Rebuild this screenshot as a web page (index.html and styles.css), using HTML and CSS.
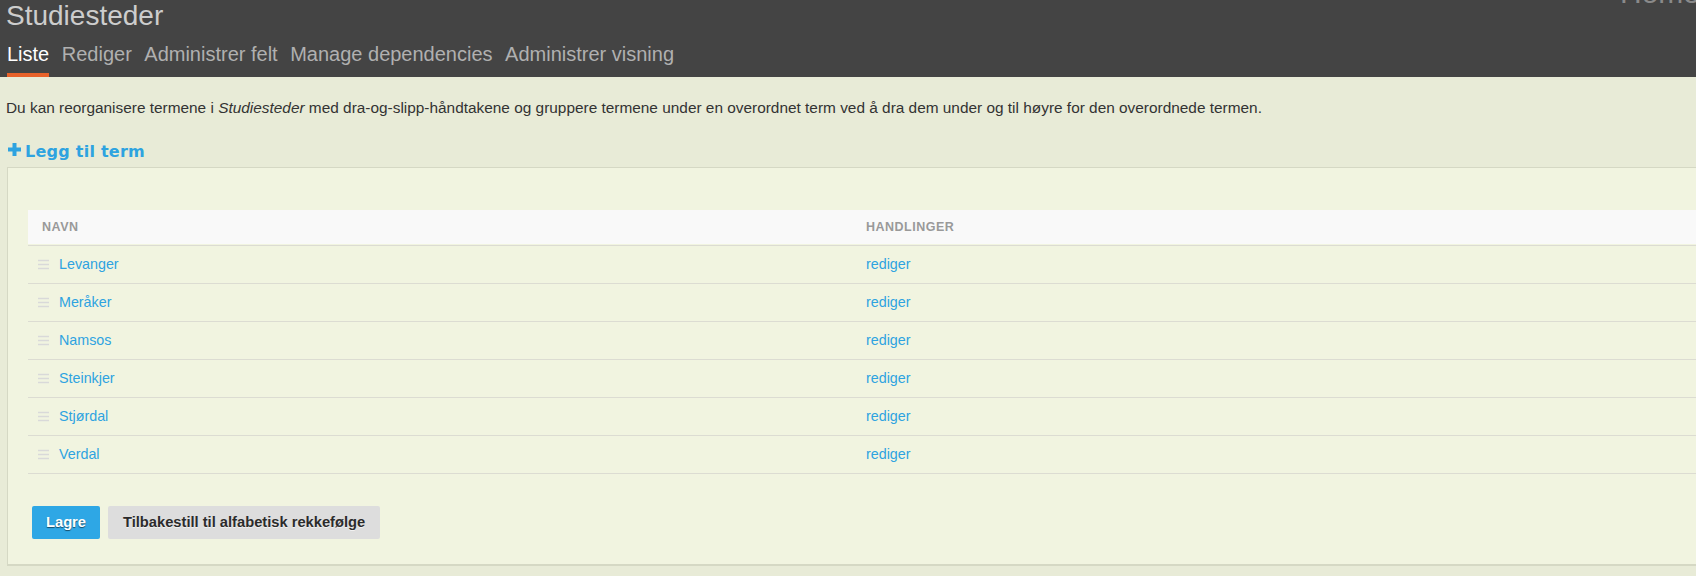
FILE: index.html
```html
<!DOCTYPE html>
<html lang="no">
<head>
<meta charset="utf-8">
<title>Studiesteder</title>
<link rel="stylesheet" href="styles.css">
</head>
<body>
<div class="page">
  <header class="topbar">
    <a class="home-link" href="#">Home</a>
    <h1 class="page-title">Studiesteder</h1>
    <nav class="tabs">
      <a class="tab active" href="#">Liste</a>
      <a class="tab" href="#">Rediger</a>
      <a class="tab" href="#">Administrer felt</a>
      <a class="tab" href="#">Manage dependencies</a>
      <a class="tab" href="#">Administrer visning</a>
    </nav>
  </header>
  <main class="content">
    <p class="help">Du kan reorganisere termene i <em>Studiesteder</em> med dra-og-slipp-håndtakene og gruppere termene under en overordnet term ved å dra dem under og til høyre for den overordnede termen.</p>
    <a class="action-link" href="#"><svg class="plus" width="13" height="13" viewBox="0 0 13 13"><path d="M4.5 0h4v4.5H13v4H8.5V13h-4V8.5H0v-4h4.5z" fill="currentColor"/></svg>Legg til term</a>
    <section class="panel">
      <div class="table">
        <div class="thead">
          <div class="th th-name">Navn</div>
          <div class="th th-ops">Handlinger</div>
        </div>
        <div class="row">
          <div class="cell name"><svg class="handle" width="11" height="11" viewBox="0 0 11 11"><path d="M0 1.5h11M0 5.5h11M0 9.5h11" stroke="currentColor" stroke-width="1.6"/></svg><a href="#">Levanger</a></div>
          <div class="cell ops"><a href="#">rediger</a></div>
        </div>
        <div class="row">
          <div class="cell name"><svg class="handle" width="11" height="11" viewBox="0 0 11 11"><path d="M0 1.5h11M0 5.5h11M0 9.5h11" stroke="currentColor" stroke-width="1.6"/></svg><a href="#">Meråker</a></div>
          <div class="cell ops"><a href="#">rediger</a></div>
        </div>
        <div class="row">
          <div class="cell name"><svg class="handle" width="11" height="11" viewBox="0 0 11 11"><path d="M0 1.5h11M0 5.5h11M0 9.5h11" stroke="currentColor" stroke-width="1.6"/></svg><a href="#">Namsos</a></div>
          <div class="cell ops"><a href="#">rediger</a></div>
        </div>
        <div class="row">
          <div class="cell name"><svg class="handle" width="11" height="11" viewBox="0 0 11 11"><path d="M0 1.5h11M0 5.5h11M0 9.5h11" stroke="currentColor" stroke-width="1.6"/></svg><a href="#">Steinkjer</a></div>
          <div class="cell ops"><a href="#">rediger</a></div>
        </div>
        <div class="row">
          <div class="cell name"><svg class="handle" width="11" height="11" viewBox="0 0 11 11"><path d="M0 1.5h11M0 5.5h11M0 9.5h11" stroke="currentColor" stroke-width="1.6"/></svg><a href="#">Stjørdal</a></div>
          <div class="cell ops"><a href="#">rediger</a></div>
        </div>
        <div class="row">
          <div class="cell name"><svg class="handle" width="11" height="11" viewBox="0 0 11 11"><path d="M0 1.5h11M0 5.5h11M0 9.5h11" stroke="currentColor" stroke-width="1.6"/></svg><a href="#">Verdal</a></div>
          <div class="cell ops"><a href="#">rediger</a></div>
        </div>
      </div>
      <div class="actions">
        <button class="btn btn-primary" type="button">Lagre</button>
        <button class="btn btn-secondary" type="button">Tilbakestill til alfabetisk rekkefølge</button>
      </div>
    </section>
  </main>
</div>
</body>
</html>
```

FILE: styles.css
```css
html, body {
  margin: 0;
  overflow: hidden;
}

body {
  background: #e8ebd7;
  color: #333;
  font-family: "Liberation Sans", Arial, sans-serif;
}

.page {
  width: 100%;
}

/* Header */
.topbar {
  position: relative;
  background: #444444;
  height: 77px;
  padding-left: 6px;
  box-sizing: border-box;
}

.home-link {
  position: absolute;
  top: -22.5px;
  left: 1620px;
  font-size: 30px;
  line-height: 30px;
  color: #8a8a8a;
  text-decoration: none;
  white-space: nowrap;
}

.page-title {
  margin: 0;
  font-size: 28px;
  line-height: 32px;
  font-weight: normal;
  color: #cdcdcd;
}

.tabs {
  display: flex;
  gap: 12.5px;
  margin-top: 10px;
  margin-left: 1px;
}

.tab {
  font-size: 20px;
  line-height: 24px;
  color: #b0b0b0;
  text-decoration: none;
  padding-bottom: 7px;
  border-bottom: 4px solid transparent;
}

.tab.active {
  color: #ffffff;
  border-bottom-color: #e8622a;
}

/* Content */
.content {
  padding-left: 6px;
}

.help {
  margin: 21px 0 0;
  font-size: 15.4px;
  line-height: 20px;
  color: #333;
}

.action-link {
  display: flex;
  align-items: flex-start;
  margin-top: 24px;
  margin-left: 2px;
  color: #2ea3e0;
  text-decoration: none;
  font-family: "DejaVu Sans", Verdana, sans-serif;
  font-weight: bold;
  font-size: 16px;
  letter-spacing: 0.25px;
  line-height: 20px;
  width: max-content;
}

.plus {
  margin-top: 0.5px;
  margin-right: 4px;
}

.panel {
  margin-top: 5px;
  margin-left: 1px;
  width: 1780px;
  background: #f1f4e0;
  border: 1px solid #d5d8c4;
  border-bottom-width: 2px;
  padding: 42px 0 25px 20px;
}

/* Table */
.table {
  display: flex;
  flex-direction: column;
}

.thead,
.row {
  display: grid;
  grid-template-columns: 826px 1fr;
}

.thead {
  height: 34px;
  padding-bottom: 1px;
  background: #f9f9f9;
  background-clip: content-box;
  border-bottom: 1px solid #dcdcd2;
}

.th {
  font-size: 12.5px;
  font-weight: bold;
  letter-spacing: 0.5px;
  text-transform: uppercase;
  color: #999;
  line-height: 34px;
}

.th-name {
  padding-left: 14px;
}

.th-ops {
  padding-left: 12px;
}

.row {
  height: 37px;
  border-bottom: 1px solid #dcdcd2;
}

.cell {
  display: flex;
  align-items: center;
  height: 20px;
  padding-top: 8px;
  font-size: 14.3px;
  line-height: 20px;
}

.cell a {
  color: #2ea3e0;
  text-decoration: none;
}

.cell.name {
  padding-left: 10px;
}

.cell.ops {
  padding-left: 12px;
}

.handle {
  color: #d9d9d9;
  margin-right: 10px;
}

/* Buttons */
.actions {
  display: flex;
  gap: 8px;
  margin-top: 32px;
  margin-left: 4px;
}

.btn {
  height: 33px;
  padding: 0 14px;
  border: 0;
  border-radius: 2px;
  font-family: "Liberation Sans", Arial, sans-serif;
  font-weight: bold;
  font-size: 14.7px;
  line-height: 19px;
  cursor: pointer;
}

.btn-primary {
  background: #2ea7e5;
  color: #ffffff;
  text-shadow: 0 1px 1px rgba(0, 0, 0, 0.55);
}

.btn-secondary {
  padding: 0 15px;
  background: #dddddd;
  color: #2b2b2b;
  text-shadow: 0 1px 0 rgba(255, 255, 255, 0.6);
}
```
